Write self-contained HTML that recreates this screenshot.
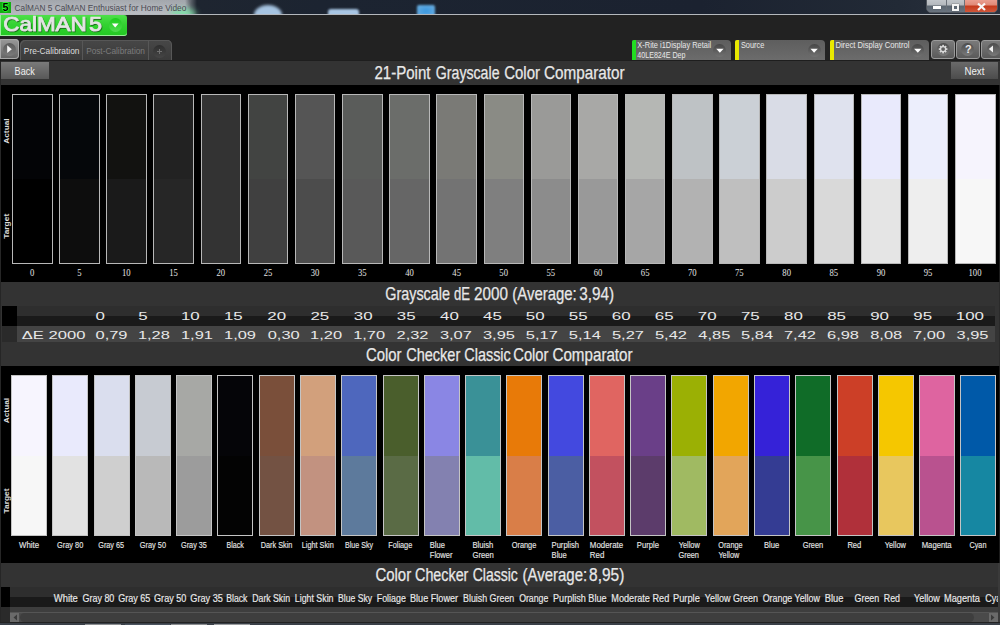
<!DOCTYPE html>
<html><head><meta charset="utf-8"><style>
html,body{margin:0;padding:0;width:1000px;height:625px;overflow:hidden;background:#222;font-family:"Liberation Sans", sans-serif}
</style></head><body>
<div style="position:absolute;left:0;top:0;width:1000px;height:15px;background:linear-gradient(90deg,#aaaeb4 0,#b0b4ba 120px,#acb0b6 185px,#5a6068 191px,#1e2530 197px,#1c2431 320px,#1b2230 700px,#222a36 900px,#2a323e 1000px);overflow:hidden">
<div style="position:absolute;left:0;top:0;width:190px;height:15px;background:linear-gradient(rgba(0,0,0,.06),rgba(255,255,255,.08) 70%,rgba(255,255,255,.15))"></div>
<div style="position:absolute;left:170px;top:9px;width:26px;height:10px;border-radius:50%;background:#7ee0a8;filter:blur(3px)"></div>
<div style="position:absolute;left:254px;top:5px;width:28px;height:20px;border-radius:50%;background:#a6c4e2;filter:blur(1.5px)"></div>
<div style="position:absolute;left:328px;top:8.5px;width:31px;height:10px;border-radius:3px;background:#a8c6e4;filter:blur(1.2px)"></div>
<div style="position:absolute;left:417px;top:5px;width:18px;height:12px;border-radius:2px;background:radial-gradient(#3a98e0,#70b0e0);filter:blur(1.2px)"></div>
<div style="position:absolute;left:0;top:2px;width:11px;height:11px;background:#12b012"></div>
<div style="position:absolute;left:925.5px;top:-2px;width:72.5px;height:15px;border:1px solid #50565e;border-radius:0 0 5px 5px;box-sizing:border-box;background:#777"></div>
<div style="position:absolute;left:926.5px;top:-1px;width:19.5px;height:13px;border-radius:0 0 0 4px;background:linear-gradient(#c4c8cc 0,#b4b8bd 45%,#5c6670 55%,#6a7480 100%)"></div>
<div style="position:absolute;left:946.5px;top:-1px;width:17px;height:13px;background:linear-gradient(#c4c8cc 0,#b4b8bd 45%,#5c6670 55%,#6a7480 100%)"></div>
<div style="position:absolute;left:964px;top:-1px;width:33px;height:13px;border-radius:0 0 4px 0;background:linear-gradient(#eca294 0,#e08a78 45%,#c43a1c 55%,#d0583c 100%)"></div>
<div style="position:absolute;left:946px;top:0;width:1px;height:12px;background:#6a7078"></div>
<div style="position:absolute;left:963.5px;top:0;width:1px;height:12px;background:#6a7078"></div>
<div style="position:absolute;left:933px;top:6px;width:7.5px;height:2.5px;background:#fff;box-shadow:0 0 1px #333"></div>
<div style="position:absolute;left:951.5px;top:3.5px;width:7px;height:7px;border:2px solid #f4f4f4;box-sizing:border-box;box-shadow:0 0 1px #333"></div>
<div style="position:absolute;left:0;top:14px;width:1000px;height:1px;background:#b4b8bd"></div>
</div>
<svg style="position:absolute;left:0;top:0" width="1000" height="15"><path d="M978 3.5 L985 10 M985 3.5 L978 10" stroke="#f8f8f8" stroke-width="2.2"/></svg>
<div style="position:absolute;left:0;top:15px;width:1000px;height:46px;background:#222222"></div>
<div style="position:absolute;left:0;top:15px;width:127px;height:21px;border-radius:0 3px 3px 0;background:linear-gradient(#4ee04a,#34d232 45%,#22c822);box-shadow:inset 0 -1px 0 #9af09a, inset 1px 0 0 #9af09a"></div>
<div style="position:absolute;left:108.5px;top:18px;width:13.5px;height:14px;border-radius:50%;background:linear-gradient(#1ccc1c,#50dc50)"></div>
<svg style="position:absolute;left:0;top:0" width="130" height="40"><path d="M111.8 23.6 L118.6 23.6 L115.2 27.4 Z" fill="#fff"/></svg>

<div style="position:absolute;left:0;top:39px;width:19px;height:20px;border-radius:0 4px 4px 0;background:linear-gradient(#9a9a9a,#646464);box-shadow:inset 0 0 0 1px #a8a8a8"></div>
<div style="position:absolute;left:2.5px;top:42.5px;width:13px;height:13px;border-radius:50%;background:linear-gradient(#5a5a5a,#7c7c7c)"></div>
<svg style="position:absolute;left:0;top:0" width="30" height="62"><path d="M7.2 45.3 L11.8 49.2 L7.2 53 Z" fill="#f4f4f4"/></svg>

<div style="position:absolute;left:20px;top:39.5px;width:152px;height:21px;border-radius:5px 5px 0 0;background:linear-gradient(#474747,#3a3a3a);box-shadow:inset 1px 1px 0 #575757, inset -1px 0 0 #575757"></div>
<div style="position:absolute;left:82px;top:41px;width:1px;height:19px;background:#575757"></div>
<div style="position:absolute;left:148px;top:41px;width:1px;height:19px;background:#575757"></div>
<div style="position:absolute;left:153px;top:44.5px;width:13px;height:13px;border-radius:50%;background:linear-gradient(#2e2e2e,#464646)"></div>
<svg style="position:absolute;left:0;top:0" width="200" height="62"><path d="M159.5 49 V54 M157 51.5 H162" stroke="#707070" stroke-width="1"/></svg>

<div style="position:absolute;left:631.7px;top:39.5px;width:99.3px;height:20.5px;border-radius:2px 4px 0 0;background:linear-gradient(#5e5e5e,#666 60%,#6c6c6c)"></div><div style="position:absolute;left:631.7px;top:40px;width:4px;height:20px;border-radius:2px 0 0 0;background:#22dd22"></div><div style="position:absolute;left:713.4px;top:43.5px;width:13px;height:13.5px;border-radius:50%;background:linear-gradient(#474747,#727272)"></div><svg style="position:absolute;left:0;top:0" width="1000" height="62"><path d="M716.2 48.8 L723.6 48.8 L719.9 52.8 Z" fill="#fff"/></svg>
<div style="position:absolute;left:735.0px;top:39.5px;width:90.2px;height:20.5px;border-radius:2px 4px 0 0;background:linear-gradient(#5e5e5e,#666 60%,#6c6c6c)"></div><div style="position:absolute;left:735.0px;top:40px;width:4px;height:20px;border-radius:2px 0 0 0;background:#e8e800"></div><div style="position:absolute;left:807.6px;top:43.5px;width:13px;height:13.5px;border-radius:50%;background:linear-gradient(#474747,#727272)"></div><svg style="position:absolute;left:0;top:0" width="1000" height="62"><path d="M810.4 48.8 L817.8 48.8 L814.1 52.8 Z" fill="#fff"/></svg>
<div style="position:absolute;left:829.7px;top:39.5px;width:99.2px;height:20.5px;border-radius:2px 4px 0 0;background:linear-gradient(#5e5e5e,#666 60%,#6c6c6c)"></div><div style="position:absolute;left:829.7px;top:40px;width:4px;height:20px;border-radius:2px 0 0 0;background:#e8e800"></div><div style="position:absolute;left:911.3px;top:43.5px;width:13px;height:13.5px;border-radius:50%;background:linear-gradient(#474747,#727272)"></div><svg style="position:absolute;left:0;top:0" width="1000" height="62"><path d="M914.1 48.8 L921.5 48.8 L917.8 52.8 Z" fill="#fff"/></svg>
<div style="position:absolute;left:931.2px;top:39.5px;width:23.5px;height:19.5px;border-radius:3px;box-sizing:border-box;border:1px solid #9a9a9a;background:linear-gradient(#7a7a7a,#5a5a5a)"></div><div style="position:absolute;left:936.5px;top:42.5px;width:13px;height:13px;border-radius:50%;background:linear-gradient(#4c4c4c,#7a7a7a)"></div>
<div style="position:absolute;left:955.9px;top:39.5px;width:23.7px;height:19.5px;border-radius:3px;box-sizing:border-box;border:1px solid #9a9a9a;background:linear-gradient(#7a7a7a,#5a5a5a)"></div><div style="position:absolute;left:961.2px;top:42.5px;width:13px;height:13px;border-radius:50%;background:linear-gradient(#4c4c4c,#7a7a7a)"></div>
<div style="position:absolute;left:981.4px;top:39.5px;width:24.0px;height:19.5px;border-radius:3px;box-sizing:border-box;border:1px solid #9a9a9a;background:linear-gradient(#7a7a7a,#5a5a5a)"></div><div style="position:absolute;left:986.9px;top:42.5px;width:13px;height:13px;border-radius:50%;background:linear-gradient(#4c4c4c,#7a7a7a)"></div>
<svg style="position:absolute;left:0;top:0" width="1000" height="62">
<g transform="translate(943.1 49.1)" fill="#dadada">
<circle r="3.1"/>
<rect x="-0.85" y="-4.3" width="1.7" height="8.6"/>
<rect x="-0.85" y="-4.3" width="1.7" height="8.6" transform="rotate(45)"/>
<rect x="-0.85" y="-4.3" width="1.7" height="8.6" transform="rotate(90)"/>
<rect x="-0.85" y="-4.3" width="1.7" height="8.6" transform="rotate(135)"/>
<circle r="1.9" fill="#5e5e5e"/>
</g>
<path d="M993 45.5 L988.8 49 L993 52.5 Z" fill="#f0f0f0"/>
</svg>
<div style="position:absolute;left:0;top:60px;width:1000px;height:1px;background:#1e1e1e"></div>
<div style="position:absolute;left:0;top:61px;width:1000px;height:24px;background:#333333"></div>
<div style="position:absolute;left:0;top:61px;width:1px;height:24px;background:#262626"></div>
<div style="position:absolute;left:1px;top:62px;width:48px;height:17px;background:linear-gradient(#7a7a7a,#585858)"></div>
<div style="position:absolute;left:951.2px;top:62px;width:47px;height:17px;background:linear-gradient(#6a6a6a,#4c4c4c)"></div>
<div style="position:absolute;left:0;top:85px;width:1px;height:197px;background:#262626"></div>
<div style="position:absolute;left:1px;top:85px;width:998px;height:197px;background:#000"></div>
<div style="position:absolute;left:999px;top:85px;width:1px;height:197px;background:#1c1c1c"></div>
<div style="position:absolute;left:12.00px;top:94px;width:40.5px;height:170px;box-sizing:border-box;border:1px solid #b8b8b8;background:linear-gradient(#030406 0,#030406 50%,#000000 50%,#000000 100%)"></div>
<div style="position:absolute;left:59.15px;top:94px;width:40.5px;height:170px;box-sizing:border-box;border:1px solid #b8b8b8;background:linear-gradient(#05070a 0,#05070a 50%,#0d0d0d 50%,#0d0d0d 100%)"></div>
<div style="position:absolute;left:106.30px;top:94px;width:40.5px;height:170px;box-sizing:border-box;border:1px solid #b8b8b8;background:linear-gradient(#121210 0,#121210 50%,#1a1a1a 50%,#1a1a1a 100%)"></div>
<div style="position:absolute;left:153.45px;top:94px;width:40.5px;height:170px;box-sizing:border-box;border:1px solid #b8b8b8;background:linear-gradient(#222222 0,#222222 50%,#262626 50%,#262626 100%)"></div>
<div style="position:absolute;left:200.60px;top:94px;width:40.5px;height:170px;box-sizing:border-box;border:1px solid #b8b8b8;background:linear-gradient(#333333 0,#333333 50%,#333333 50%,#333333 100%)"></div>
<div style="position:absolute;left:247.75px;top:94px;width:40.5px;height:170px;box-sizing:border-box;border:1px solid #b8b8b8;background:linear-gradient(#424442 0,#424442 50%,#404040 50%,#404040 100%)"></div>
<div style="position:absolute;left:294.90px;top:94px;width:40.5px;height:170px;box-sizing:border-box;border:1px solid #b8b8b8;background:linear-gradient(#555555 0,#555555 50%,#4c4c4c 50%,#4c4c4c 100%)"></div>
<div style="position:absolute;left:342.05px;top:94px;width:40.5px;height:170px;box-sizing:border-box;border:1px solid #b8b8b8;background:linear-gradient(#5a5c5a 0,#5a5c5a 50%,#595959 50%,#595959 100%)"></div>
<div style="position:absolute;left:389.20px;top:94px;width:40.5px;height:170px;box-sizing:border-box;border:1px solid #b8b8b8;background:linear-gradient(#6b6d6a 0,#6b6d6a 50%,#666666 50%,#666666 100%)"></div>
<div style="position:absolute;left:436.35px;top:94px;width:40.5px;height:170px;box-sizing:border-box;border:1px solid #b8b8b8;background:linear-gradient(#7a7a76 0,#7a7a76 50%,#737373 50%,#737373 100%)"></div>
<div style="position:absolute;left:483.50px;top:94px;width:40.5px;height:170px;box-sizing:border-box;border:1px solid #b8b8b8;background:linear-gradient(#8a8b85 0,#8a8b85 50%,#7f7f7f 50%,#7f7f7f 100%)"></div>
<div style="position:absolute;left:530.65px;top:94px;width:40.5px;height:170px;box-sizing:border-box;border:1px solid #b8b8b8;background:linear-gradient(#9a9a98 0,#9a9a98 50%,#8c8c8c 50%,#8c8c8c 100%)"></div>
<div style="position:absolute;left:577.80px;top:94px;width:40.5px;height:170px;box-sizing:border-box;border:1px solid #b8b8b8;background:linear-gradient(#a8a8a6 0,#a8a8a6 50%,#999999 50%,#999999 100%)"></div>
<div style="position:absolute;left:624.95px;top:94px;width:40.5px;height:170px;box-sizing:border-box;border:1px solid #b8b8b8;background:linear-gradient(#b5b7b4 0,#b5b7b4 50%,#a6a6a6 50%,#a6a6a6 100%)"></div>
<div style="position:absolute;left:672.10px;top:94px;width:40.5px;height:170px;box-sizing:border-box;border:1px solid #b8b8b8;background:linear-gradient(#bec2c5 0,#bec2c5 50%,#b2b2b2 50%,#b2b2b2 100%)"></div>
<div style="position:absolute;left:719.25px;top:94px;width:40.5px;height:170px;box-sizing:border-box;border:1px solid #b8b8b8;background:linear-gradient(#cbd0d6 0,#cbd0d6 50%,#bfbfbf 50%,#bfbfbf 100%)"></div>
<div style="position:absolute;left:766.40px;top:94px;width:40.5px;height:170px;box-sizing:border-box;border:1px solid #b8b8b8;background:linear-gradient(#d9dce6 0,#d9dce6 50%,#cccccc 50%,#cccccc 100%)"></div>
<div style="position:absolute;left:813.55px;top:94px;width:40.5px;height:170px;box-sizing:border-box;border:1px solid #b8b8b8;background:linear-gradient(#dfe2ee 0,#dfe2ee 50%,#d9d9d9 50%,#d9d9d9 100%)"></div>
<div style="position:absolute;left:860.70px;top:94px;width:40.5px;height:170px;box-sizing:border-box;border:1px solid #b8b8b8;background:linear-gradient(#e9eafc 0,#e9eafc 50%,#e5e5e5 50%,#e5e5e5 100%)"></div>
<div style="position:absolute;left:907.85px;top:94px;width:40.5px;height:170px;box-sizing:border-box;border:1px solid #b8b8b8;background:linear-gradient(#eceefc 0,#eceefc 50%,#eeeeee 50%,#eeeeee 100%)"></div>
<div style="position:absolute;left:955.00px;top:94px;width:40.5px;height:170px;box-sizing:border-box;border:1px solid #b8b8b8;background:linear-gradient(#f6f4fd 0,#f6f4fd 50%,#f7f7f7 50%,#f7f7f7 100%)"></div>
<div style="position:absolute;left:0;top:282px;width:1000px;height:84px;background:#333333"></div>
<div style="position:absolute;left:0;top:282px;width:1px;height:84px;background:#262626"></div>
<div style="position:absolute;left:2px;top:306px;width:15px;height:20px;background:#000"></div>
<div style="position:absolute;left:17px;top:306px;width:978px;height:10px;background:#2e2e2e"></div>
<div style="position:absolute;left:17px;top:316px;width:978px;height:10px;background:#1a1a1a"></div>
<div style="position:absolute;left:2px;top:326px;width:15px;height:16px;background:#2a2a2a"></div>
<div style="position:absolute;left:17px;top:326px;width:978px;height:16px;background:#444444"></div>
<div style="position:absolute;left:0;top:366px;width:1px;height:197px;background:#262626"></div>
<div style="position:absolute;left:1px;top:366px;width:998px;height:197px;background:#000"></div>
<div style="position:absolute;left:999px;top:366px;width:1px;height:197px;background:#1c1c1c"></div>
<div style="position:absolute;left:999px;top:282px;width:1px;height:84px;background:#2a2a2a"></div>
<div style="position:absolute;left:11.00px;top:375px;width:36px;height:161px;box-sizing:border-box;border:1px solid #c4c4c4;background:linear-gradient(#f7f5fe 0,#f7f5fe 80px,#f7f7f7 80px,#f7f7f7 100%)"></div>
<div style="position:absolute;left:52.28px;top:375px;width:36px;height:161px;box-sizing:border-box;border:1px solid #c4c4c4;background:linear-gradient(#e9eafc 0,#e9eafc 80px,#e2e2e2 80px,#e2e2e2 100%)"></div>
<div style="position:absolute;left:93.56px;top:375px;width:36px;height:161px;box-sizing:border-box;border:1px solid #c4c4c4;background:linear-gradient(#dadeee 0,#dadeee 80px,#cfcfcf 80px,#cfcfcf 100%)"></div>
<div style="position:absolute;left:134.84px;top:375px;width:36px;height:161px;box-sizing:border-box;border:1px solid #c4c4c4;background:linear-gradient(#c7cbd2 0,#c7cbd2 80px,#b9b9b9 80px,#b9b9b9 100%)"></div>
<div style="position:absolute;left:176.12px;top:375px;width:36px;height:161px;box-sizing:border-box;border:1px solid #c4c4c4;background:linear-gradient(#a7a8a5 0,#a7a8a5 80px,#9c9c9c 80px,#9c9c9c 100%)"></div>
<div style="position:absolute;left:217.40px;top:375px;width:36px;height:161px;box-sizing:border-box;border:1px solid #c4c4c4;background:linear-gradient(#050508 0,#050508 80px,#030303 80px,#030303 100%)"></div>
<div style="position:absolute;left:258.68px;top:375px;width:36px;height:161px;box-sizing:border-box;border:1px solid #c4c4c4;background:linear-gradient(#7a4f3a 0,#7a4f3a 80px,#735243 80px,#735243 100%)"></div>
<div style="position:absolute;left:299.96px;top:375px;width:36px;height:161px;box-sizing:border-box;border:1px solid #c4c4c4;background:linear-gradient(#d2a07c 0,#d2a07c 80px,#c29280 80px,#c29280 100%)"></div>
<div style="position:absolute;left:341.24px;top:375px;width:36px;height:161px;box-sizing:border-box;border:1px solid #c4c4c4;background:linear-gradient(#4e67bd 0,#4e67bd 80px,#5d7a9c 80px,#5d7a9c 100%)"></div>
<div style="position:absolute;left:382.52px;top:375px;width:36px;height:161px;box-sizing:border-box;border:1px solid #c4c4c4;background:linear-gradient(#4a5e2c 0,#4a5e2c 80px,#5a6b45 80px,#5a6b45 100%)"></div>
<div style="position:absolute;left:423.80px;top:375px;width:36px;height:161px;box-sizing:border-box;border:1px solid #c4c4c4;background:linear-gradient(#8a86e4 0,#8a86e4 80px,#8381b0 80px,#8381b0 100%)"></div>
<div style="position:absolute;left:465.08px;top:375px;width:36px;height:161px;box-sizing:border-box;border:1px solid #c4c4c4;background:linear-gradient(#3a9197 0,#3a9197 80px,#62bca8 80px,#62bca8 100%)"></div>
<div style="position:absolute;left:506.36px;top:375px;width:36px;height:161px;box-sizing:border-box;border:1px solid #c4c4c4;background:linear-gradient(#e87a08 0,#e87a08 80px,#d97e48 80px,#d97e48 100%)"></div>
<div style="position:absolute;left:547.64px;top:375px;width:36px;height:161px;box-sizing:border-box;border:1px solid #c4c4c4;background:linear-gradient(#4349df 0,#4349df 80px,#4b5ea3 80px,#4b5ea3 100%)"></div>
<div style="position:absolute;left:588.92px;top:375px;width:36px;height:161px;box-sizing:border-box;border:1px solid #c4c4c4;background:linear-gradient(#e06561 0,#e06561 80px,#c2515f 80px,#c2515f 100%)"></div>
<div style="position:absolute;left:630.20px;top:375px;width:36px;height:161px;box-sizing:border-box;border:1px solid #c4c4c4;background:linear-gradient(#6a3f88 0,#6a3f88 80px,#5c3c6b 80px,#5c3c6b 100%)"></div>
<div style="position:absolute;left:671.48px;top:375px;width:36px;height:161px;box-sizing:border-box;border:1px solid #c4c4c4;background:linear-gradient(#9bb004 0,#9bb004 80px,#a0ba62 80px,#a0ba62 100%)"></div>
<div style="position:absolute;left:712.76px;top:375px;width:36px;height:161px;box-sizing:border-box;border:1px solid #c4c4c4;background:linear-gradient(#f2a600 0,#f2a600 80px,#e2a55a 80px,#e2a55a 100%)"></div>
<div style="position:absolute;left:754.04px;top:375px;width:36px;height:161px;box-sizing:border-box;border:1px solid #c4c4c4;background:linear-gradient(#3522d8 0,#3522d8 80px,#343c93 80px,#343c93 100%)"></div>
<div style="position:absolute;left:795.32px;top:375px;width:36px;height:161px;box-sizing:border-box;border:1px solid #c4c4c4;background:linear-gradient(#106c28 0,#106c28 80px,#479448 80px,#479448 100%)"></div>
<div style="position:absolute;left:836.60px;top:375px;width:36px;height:161px;box-sizing:border-box;border:1px solid #c4c4c4;background:linear-gradient(#cc3f27 0,#cc3f27 80px,#b0303a 80px,#b0303a 100%)"></div>
<div style="position:absolute;left:877.88px;top:375px;width:36px;height:161px;box-sizing:border-box;border:1px solid #c4c4c4;background:linear-gradient(#f5c700 0,#f5c700 80px,#e8c75e 80px,#e8c75e 100%)"></div>
<div style="position:absolute;left:919.16px;top:375px;width:36px;height:161px;box-sizing:border-box;border:1px solid #c4c4c4;background:linear-gradient(#de64a0 0,#de64a0 80px,#b9528f 80px,#b9528f 100%)"></div>
<div style="position:absolute;left:960.44px;top:375px;width:36px;height:161px;box-sizing:border-box;border:1px solid #c4c4c4;background:linear-gradient(#0059a8 0,#0059a8 80px,#1687a2 80px,#1687a2 100%)"></div>
<div style="position:absolute;left:0;top:563px;width:1000px;height:59px;background:#333333"></div>
<div style="position:absolute;left:0;top:563px;width:1px;height:59px;background:#262626"></div>
<div style="position:absolute;left:1px;top:587px;width:9px;height:20px;background:#000"></div>
<div style="position:absolute;left:10px;top:587px;width:988px;height:10px;background:#2e2e2e"></div>
<div style="position:absolute;left:10px;top:597px;width:988px;height:10px;background:#1a1a1a"></div>
<div style="position:absolute;left:1px;top:607px;width:9px;height:15px;background:#2a2a2a"></div>
<div style="position:absolute;left:10px;top:607px;width:988px;height:15px;background:#3e3e3e"></div>
<div style="position:absolute;left:10px;top:612px;width:988px;height:1px;background:#555555"></div>
<div style="position:absolute;left:10px;top:613px;width:988px;height:9px;background:#4a4a4a"></div>
<div style="position:absolute;left:20px;top:613px;width:954px;height:9px;border-radius:5px;background:#3e3e3e"></div>
<div style="position:absolute;left:10px;top:613px;width:9px;height:9px;background:#6a6a6a"></div>
<div style="position:absolute;left:989px;top:613px;width:9px;height:9px;background:#6a6a6a"></div>
<svg style="position:absolute;left:0;top:0" width="1000" height="625"><path d="M17 614.5 L13.5 617.5 L17 620.5 Z M991 614.5 L994.5 617.5 L991 620.5 Z" fill="#3a3a3a"/></svg>
<div style="position:absolute;left:998px;top:563px;width:2px;height:59px;background:#3a3a3a"></div>
<div style="position:absolute;left:0;top:622.5px;width:1000px;height:2.5px;background:#3a4048"></div>
<div style="position:absolute;left:85px;top:623.5px;width:36px;height:1.5px;background:#8c8e90"></div>
<div style="position:absolute;left:125px;top:623.5px;width:45px;height:1.5px;background:#4c5560"></div>
<div style="position:absolute;left:171px;top:623.5px;width:36px;height:1.5px;background:#8c8e90"></div>
<div style="position:absolute;left:214px;top:623.5px;width:36px;height:1.5px;background:#9a9c9e"></div>
<svg style="position:absolute;left:0;top:0" width="20" height="625">
<g font-family="Liberation Sans" font-weight="bold" font-size="7.6" fill="#dcdcdc">
<text transform="translate(8.6 143.8) rotate(-90)" textLength="25.5" lengthAdjust="spacingAndGlyphs">Actual</text>
<text transform="translate(8.6 238.8) rotate(-90)" textLength="25" lengthAdjust="spacingAndGlyphs">Target</text>
<text transform="translate(8.6 423.3) rotate(-90)" textLength="25.5" lengthAdjust="spacingAndGlyphs">Actual</text>
<text transform="translate(8.6 513.5) rotate(-90)" textLength="25" lengthAdjust="spacingAndGlyphs">Target</text>
</g></svg>
<svg style="position:absolute;left:0;top:0" width="1000" height="625">
<defs><filter id="sh" x="-10%" y="-10%" width="120%" height="130%"><feDropShadow dx="0.8" dy="1" stdDeviation="0.6" flood-color="#136313" flood-opacity="0.9"/></filter>
<clipPath id="cl"><rect x="0" y="587" width="998" height="20"/></clipPath></defs>
<text x="2.48" y="11.00" font-family="Liberation Sans, sans-serif" font-weight="bold" font-size="10.000" fill="#000000" textLength="6.01" lengthAdjust="spacingAndGlyphs" stroke="#30ff30" stroke-width="1.3" paint-order="stroke">5</text>
<text x="14.59" y="10.50" font-family="Liberation Sans, sans-serif" font-weight="normal" font-size="9.420" fill="#4a4a52" textLength="171.71" lengthAdjust="spacingAndGlyphs">CalMAN 5 CalMAN Enthusiast for Home Video</text>
<text x="3.38" y="30.90" font-family="Liberation Sans, sans-serif" font-weight="normal" font-size="20.000" fill="#e4e4e4" textLength="83.33" lengthAdjust="spacingAndGlyphs" stroke="#e4e4e4" stroke-width="0.7" filter="url(#sh)">CalMAN</text>
<text x="88.97" y="30.90" font-family="Liberation Sans, sans-serif" font-weight="normal" font-size="20.000" fill="#e4e4e4" textLength="12.98" lengthAdjust="spacingAndGlyphs" stroke="#e4e4e4" stroke-width="0.7" filter="url(#sh)">5</text>
<text x="23.83" y="53.50" font-family="Liberation Sans, sans-serif" font-weight="normal" font-size="8.551" fill="#dcdcdc" textLength="55.64" lengthAdjust="spacingAndGlyphs">Pre-Calibration</text>
<text x="86.14" y="53.50" font-family="Liberation Sans, sans-serif" font-weight="normal" font-size="8.551" fill="#7c7c7c" textLength="58.83" lengthAdjust="spacingAndGlyphs">Post-Calibration</text>
<text x="637.35" y="48.20" font-family="Liberation Sans, sans-serif" font-weight="normal" font-size="8.551" fill="#e8e8e8" textLength="73.91" lengthAdjust="spacingAndGlyphs">X-Rite i1Display Retail</text>
<text x="637.36" y="57.80" font-family="Liberation Sans, sans-serif" font-weight="normal" font-size="8.261" fill="#e8e8e8" textLength="48.10" lengthAdjust="spacingAndGlyphs">40LE824E Dep</text>
<text x="740.91" y="48.20" font-family="Liberation Sans, sans-serif" font-weight="normal" font-size="8.551" fill="#e8e8e8" textLength="23.36" lengthAdjust="spacingAndGlyphs">Source</text>
<text x="835.39" y="48.20" font-family="Liberation Sans, sans-serif" font-weight="normal" font-size="8.551" fill="#e8e8e8" textLength="74.09" lengthAdjust="spacingAndGlyphs">Direct Display Control</text>
<text x="964.97" y="53.00" font-family="Liberation Sans, sans-serif" font-weight="bold" font-size="10.000" fill="#eeeeee" textLength="6.58" lengthAdjust="spacingAndGlyphs">?</text>
<text x="14.57" y="74.50" font-family="Liberation Sans, sans-serif" font-weight="normal" font-size="11.449" fill="#f0f0f0" textLength="20.24" lengthAdjust="spacingAndGlyphs">Back</text>
<text x="964.42" y="74.50" font-family="Liberation Sans, sans-serif" font-weight="normal" font-size="11.159" fill="#f0f0f0" textLength="19.96" lengthAdjust="spacingAndGlyphs">Next</text>
<text x="374.45" y="79.00" font-family="Liberation Sans, sans-serif" font-weight="normal" font-size="17.971" fill="#e8e8e8" textLength="56.02" lengthAdjust="spacingAndGlyphs" stroke="#e8e8e8" stroke-width="0.25">21-Point</text>
<text x="435.79" y="79.00" font-family="Liberation Sans, sans-serif" font-weight="normal" font-size="17.971" fill="#e8e8e8" textLength="63.72" lengthAdjust="spacingAndGlyphs" stroke="#e8e8e8" stroke-width="0.25">Grayscale</text>
<text x="504.25" y="79.00" font-family="Liberation Sans, sans-serif" font-weight="normal" font-size="17.971" fill="#e8e8e8" textLength="35.74" lengthAdjust="spacingAndGlyphs" stroke="#e8e8e8" stroke-width="0.25">Color</text>
<text x="543.99" y="79.00" font-family="Liberation Sans, sans-serif" font-weight="normal" font-size="17.971" fill="#e8e8e8" textLength="80.71" lengthAdjust="spacingAndGlyphs" stroke="#e8e8e8" stroke-width="0.25">Comparator</text>
<text x="30.09" y="275.80" font-family="Liberation Serif, serif" font-weight="normal" font-size="10.462" fill="#e4e4e4" textLength="4.32" lengthAdjust="spacingAndGlyphs">0</text>
<text x="77.16" y="275.80" font-family="Liberation Serif, serif" font-weight="normal" font-size="10.462" fill="#e4e4e4" textLength="4.32" lengthAdjust="spacingAndGlyphs">5</text>
<text x="122.02" y="275.80" font-family="Liberation Serif, serif" font-weight="normal" font-size="10.462" fill="#e4e4e4" textLength="8.63" lengthAdjust="spacingAndGlyphs">10</text>
<text x="169.17" y="275.80" font-family="Liberation Serif, serif" font-weight="normal" font-size="10.462" fill="#e4e4e4" textLength="8.63" lengthAdjust="spacingAndGlyphs">15</text>
<text x="216.49" y="275.80" font-family="Liberation Serif, serif" font-weight="normal" font-size="10.462" fill="#e4e4e4" textLength="8.63" lengthAdjust="spacingAndGlyphs">20</text>
<text x="263.64" y="275.80" font-family="Liberation Serif, serif" font-weight="normal" font-size="10.462" fill="#e4e4e4" textLength="8.63" lengthAdjust="spacingAndGlyphs">25</text>
<text x="310.79" y="275.80" font-family="Liberation Serif, serif" font-weight="normal" font-size="10.462" fill="#e4e4e4" textLength="8.63" lengthAdjust="spacingAndGlyphs">30</text>
<text x="357.94" y="275.80" font-family="Liberation Serif, serif" font-weight="normal" font-size="10.462" fill="#e4e4e4" textLength="8.63" lengthAdjust="spacingAndGlyphs">35</text>
<text x="405.22" y="275.80" font-family="Liberation Serif, serif" font-weight="normal" font-size="10.462" fill="#e4e4e4" textLength="8.63" lengthAdjust="spacingAndGlyphs">40</text>
<text x="452.37" y="275.80" font-family="Liberation Serif, serif" font-weight="normal" font-size="10.462" fill="#e4e4e4" textLength="8.63" lengthAdjust="spacingAndGlyphs">45</text>
<text x="499.35" y="275.80" font-family="Liberation Serif, serif" font-weight="normal" font-size="10.462" fill="#e4e4e4" textLength="8.63" lengthAdjust="spacingAndGlyphs">50</text>
<text x="546.50" y="275.80" font-family="Liberation Serif, serif" font-weight="normal" font-size="10.462" fill="#e4e4e4" textLength="8.63" lengthAdjust="spacingAndGlyphs">55</text>
<text x="593.69" y="275.80" font-family="Liberation Serif, serif" font-weight="normal" font-size="10.462" fill="#e4e4e4" textLength="8.63" lengthAdjust="spacingAndGlyphs">60</text>
<text x="640.84" y="275.80" font-family="Liberation Serif, serif" font-weight="normal" font-size="10.462" fill="#e4e4e4" textLength="8.63" lengthAdjust="spacingAndGlyphs">65</text>
<text x="687.90" y="275.80" font-family="Liberation Serif, serif" font-weight="normal" font-size="10.462" fill="#e4e4e4" textLength="8.63" lengthAdjust="spacingAndGlyphs">70</text>
<text x="735.05" y="275.80" font-family="Liberation Serif, serif" font-weight="normal" font-size="10.462" fill="#e4e4e4" textLength="8.63" lengthAdjust="spacingAndGlyphs">75</text>
<text x="782.33" y="275.80" font-family="Liberation Serif, serif" font-weight="normal" font-size="10.462" fill="#e4e4e4" textLength="8.63" lengthAdjust="spacingAndGlyphs">80</text>
<text x="829.48" y="275.80" font-family="Liberation Serif, serif" font-weight="normal" font-size="10.462" fill="#e4e4e4" textLength="8.63" lengthAdjust="spacingAndGlyphs">85</text>
<text x="876.63" y="275.80" font-family="Liberation Serif, serif" font-weight="normal" font-size="10.462" fill="#e4e4e4" textLength="8.63" lengthAdjust="spacingAndGlyphs">90</text>
<text x="923.78" y="275.80" font-family="Liberation Serif, serif" font-weight="normal" font-size="10.462" fill="#e4e4e4" textLength="8.63" lengthAdjust="spacingAndGlyphs">95</text>
<text x="968.56" y="275.80" font-family="Liberation Serif, serif" font-weight="normal" font-size="10.462" fill="#e4e4e4" textLength="12.95" lengthAdjust="spacingAndGlyphs">100</text>
<text x="385.28" y="300.00" font-family="Liberation Sans, sans-serif" font-weight="normal" font-size="18.841" fill="#e8e8e8" textLength="64.64" lengthAdjust="spacingAndGlyphs" stroke="#e8e8e8" stroke-width="0.25">Grayscale</text>
<text x="453.88" y="300.00" font-family="Liberation Sans, sans-serif" font-weight="normal" font-size="18.841" fill="#e8e8e8" textLength="16.01" lengthAdjust="spacingAndGlyphs" stroke="#e8e8e8" stroke-width="0.25">dE</text>
<text x="474.04" y="300.00" font-family="Liberation Sans, sans-serif" font-weight="normal" font-size="18.841" fill="#e8e8e8" textLength="33.91" lengthAdjust="spacingAndGlyphs" stroke="#e8e8e8" stroke-width="0.25">2000</text>
<text x="512.30" y="300.00" font-family="Liberation Sans, sans-serif" font-weight="normal" font-size="18.841" fill="#e8e8e8" textLength="64.41" lengthAdjust="spacingAndGlyphs" stroke="#e8e8e8" stroke-width="0.25">(Average:</text>
<text x="579.34" y="300.00" font-family="Liberation Sans, sans-serif" font-weight="normal" font-size="18.841" fill="#e8e8e8" textLength="34.87" lengthAdjust="spacingAndGlyphs" stroke="#e8e8e8" stroke-width="0.25">3,94)</text>
<text x="21.67" y="339.00" font-family="Liberation Sans, sans-serif" font-weight="normal" font-size="11.594" fill="#e8e8e8" textLength="63.73" lengthAdjust="spacingAndGlyphs">ΔE 2000</text>
<text x="95.49" y="320.00" font-family="Liberation Sans, sans-serif" font-weight="normal" font-size="11.014" fill="#e8e8e8" textLength="9.40" lengthAdjust="spacingAndGlyphs">0</text>
<text x="95.51" y="339.00" font-family="Liberation Sans, sans-serif" font-weight="normal" font-size="11.594" fill="#e8e8e8" textLength="31.99" lengthAdjust="spacingAndGlyphs">0,79</text>
<text x="138.37" y="320.00" font-family="Liberation Sans, sans-serif" font-weight="normal" font-size="11.014" fill="#e8e8e8" textLength="9.40" lengthAdjust="spacingAndGlyphs">5</text>
<text x="137.90" y="339.00" font-family="Liberation Sans, sans-serif" font-weight="normal" font-size="11.594" fill="#e8e8e8" textLength="31.99" lengthAdjust="spacingAndGlyphs">1,28</text>
<text x="180.92" y="320.00" font-family="Liberation Sans, sans-serif" font-weight="normal" font-size="11.014" fill="#e8e8e8" textLength="18.80" lengthAdjust="spacingAndGlyphs">10</text>
<text x="180.95" y="339.00" font-family="Liberation Sans, sans-serif" font-weight="normal" font-size="11.594" fill="#e8e8e8" textLength="31.99" lengthAdjust="spacingAndGlyphs">1,91</text>
<text x="223.97" y="320.00" font-family="Liberation Sans, sans-serif" font-weight="normal" font-size="11.014" fill="#e8e8e8" textLength="18.80" lengthAdjust="spacingAndGlyphs">15</text>
<text x="224.00" y="339.00" font-family="Liberation Sans, sans-serif" font-weight="normal" font-size="11.594" fill="#e8e8e8" textLength="31.99" lengthAdjust="spacingAndGlyphs">1,09</text>
<text x="267.36" y="320.00" font-family="Liberation Sans, sans-serif" font-weight="normal" font-size="11.014" fill="#e8e8e8" textLength="18.80" lengthAdjust="spacingAndGlyphs">20</text>
<text x="267.71" y="339.00" font-family="Liberation Sans, sans-serif" font-weight="normal" font-size="11.594" fill="#e8e8e8" textLength="31.99" lengthAdjust="spacingAndGlyphs">0,30</text>
<text x="310.41" y="320.00" font-family="Liberation Sans, sans-serif" font-weight="normal" font-size="11.014" fill="#e8e8e8" textLength="18.80" lengthAdjust="spacingAndGlyphs">25</text>
<text x="310.10" y="339.00" font-family="Liberation Sans, sans-serif" font-weight="normal" font-size="11.594" fill="#e8e8e8" textLength="31.99" lengthAdjust="spacingAndGlyphs">1,20</text>
<text x="353.79" y="320.00" font-family="Liberation Sans, sans-serif" font-weight="normal" font-size="11.014" fill="#e8e8e8" textLength="18.80" lengthAdjust="spacingAndGlyphs">30</text>
<text x="353.15" y="339.00" font-family="Liberation Sans, sans-serif" font-weight="normal" font-size="11.594" fill="#e8e8e8" textLength="31.99" lengthAdjust="spacingAndGlyphs">1,70</text>
<text x="396.84" y="320.00" font-family="Liberation Sans, sans-serif" font-weight="normal" font-size="11.014" fill="#e8e8e8" textLength="18.80" lengthAdjust="spacingAndGlyphs">35</text>
<text x="396.53" y="339.00" font-family="Liberation Sans, sans-serif" font-weight="normal" font-size="11.594" fill="#e8e8e8" textLength="31.99" lengthAdjust="spacingAndGlyphs">2,32</text>
<text x="440.06" y="320.00" font-family="Liberation Sans, sans-serif" font-weight="normal" font-size="11.014" fill="#e8e8e8" textLength="18.80" lengthAdjust="spacingAndGlyphs">40</text>
<text x="439.91" y="339.00" font-family="Liberation Sans, sans-serif" font-weight="normal" font-size="11.594" fill="#e8e8e8" textLength="31.99" lengthAdjust="spacingAndGlyphs">3,07</text>
<text x="483.11" y="320.00" font-family="Liberation Sans, sans-serif" font-weight="normal" font-size="11.014" fill="#e8e8e8" textLength="18.80" lengthAdjust="spacingAndGlyphs">45</text>
<text x="482.96" y="339.00" font-family="Liberation Sans, sans-serif" font-weight="normal" font-size="11.594" fill="#e8e8e8" textLength="31.99" lengthAdjust="spacingAndGlyphs">3,95</text>
<text x="525.82" y="320.00" font-family="Liberation Sans, sans-serif" font-weight="normal" font-size="11.014" fill="#e8e8e8" textLength="18.80" lengthAdjust="spacingAndGlyphs">50</text>
<text x="525.84" y="339.00" font-family="Liberation Sans, sans-serif" font-weight="normal" font-size="11.594" fill="#e8e8e8" textLength="31.99" lengthAdjust="spacingAndGlyphs">5,17</text>
<text x="568.87" y="320.00" font-family="Liberation Sans, sans-serif" font-weight="normal" font-size="11.014" fill="#e8e8e8" textLength="18.80" lengthAdjust="spacingAndGlyphs">55</text>
<text x="568.89" y="339.00" font-family="Liberation Sans, sans-serif" font-weight="normal" font-size="11.594" fill="#e8e8e8" textLength="31.99" lengthAdjust="spacingAndGlyphs">5,14</text>
<text x="611.76" y="320.00" font-family="Liberation Sans, sans-serif" font-weight="normal" font-size="11.014" fill="#e8e8e8" textLength="18.80" lengthAdjust="spacingAndGlyphs">60</text>
<text x="611.94" y="339.00" font-family="Liberation Sans, sans-serif" font-weight="normal" font-size="11.594" fill="#e8e8e8" textLength="31.99" lengthAdjust="spacingAndGlyphs">5,27</text>
<text x="654.81" y="320.00" font-family="Liberation Sans, sans-serif" font-weight="normal" font-size="11.014" fill="#e8e8e8" textLength="18.80" lengthAdjust="spacingAndGlyphs">65</text>
<text x="654.99" y="339.00" font-family="Liberation Sans, sans-serif" font-weight="normal" font-size="11.594" fill="#e8e8e8" textLength="31.99" lengthAdjust="spacingAndGlyphs">5,42</text>
<text x="697.86" y="320.00" font-family="Liberation Sans, sans-serif" font-weight="normal" font-size="11.014" fill="#e8e8e8" textLength="18.80" lengthAdjust="spacingAndGlyphs">70</text>
<text x="698.37" y="339.00" font-family="Liberation Sans, sans-serif" font-weight="normal" font-size="11.594" fill="#e8e8e8" textLength="31.99" lengthAdjust="spacingAndGlyphs">4,85</text>
<text x="740.91" y="320.00" font-family="Liberation Sans, sans-serif" font-weight="normal" font-size="11.014" fill="#e8e8e8" textLength="18.80" lengthAdjust="spacingAndGlyphs">75</text>
<text x="741.09" y="339.00" font-family="Liberation Sans, sans-serif" font-weight="normal" font-size="11.594" fill="#e8e8e8" textLength="31.99" lengthAdjust="spacingAndGlyphs">5,84</text>
<text x="784.12" y="320.00" font-family="Liberation Sans, sans-serif" font-weight="normal" font-size="11.014" fill="#e8e8e8" textLength="18.80" lengthAdjust="spacingAndGlyphs">80</text>
<text x="783.98" y="339.00" font-family="Liberation Sans, sans-serif" font-weight="normal" font-size="11.594" fill="#e8e8e8" textLength="31.99" lengthAdjust="spacingAndGlyphs">7,42</text>
<text x="827.17" y="320.00" font-family="Liberation Sans, sans-serif" font-weight="normal" font-size="11.014" fill="#e8e8e8" textLength="18.80" lengthAdjust="spacingAndGlyphs">85</text>
<text x="827.03" y="339.00" font-family="Liberation Sans, sans-serif" font-weight="normal" font-size="11.594" fill="#e8e8e8" textLength="31.99" lengthAdjust="spacingAndGlyphs">6,98</text>
<text x="870.22" y="320.00" font-family="Liberation Sans, sans-serif" font-weight="normal" font-size="11.014" fill="#e8e8e8" textLength="18.80" lengthAdjust="spacingAndGlyphs">90</text>
<text x="870.24" y="339.00" font-family="Liberation Sans, sans-serif" font-weight="normal" font-size="11.594" fill="#e8e8e8" textLength="31.99" lengthAdjust="spacingAndGlyphs">8,08</text>
<text x="913.27" y="320.00" font-family="Liberation Sans, sans-serif" font-weight="normal" font-size="11.014" fill="#e8e8e8" textLength="18.80" lengthAdjust="spacingAndGlyphs">95</text>
<text x="913.13" y="339.00" font-family="Liberation Sans, sans-serif" font-weight="normal" font-size="11.594" fill="#e8e8e8" textLength="31.99" lengthAdjust="spacingAndGlyphs">7,00</text>
<text x="955.82" y="320.00" font-family="Liberation Sans, sans-serif" font-weight="normal" font-size="11.014" fill="#e8e8e8" textLength="28.19" lengthAdjust="spacingAndGlyphs">100</text>
<text x="956.51" y="339.00" font-family="Liberation Sans, sans-serif" font-weight="normal" font-size="11.594" fill="#e8e8e8" textLength="31.99" lengthAdjust="spacingAndGlyphs">3,95</text>
<text x="365.96" y="361.00" font-family="Liberation Sans, sans-serif" font-weight="normal" font-size="18.406" fill="#e8e8e8" textLength="35.54" lengthAdjust="spacingAndGlyphs" stroke="#e8e8e8" stroke-width="0.25">Color</text>
<text x="406.17" y="361.00" font-family="Liberation Sans, sans-serif" font-weight="normal" font-size="18.406" fill="#e8e8e8" textLength="54.12" lengthAdjust="spacingAndGlyphs" stroke="#e8e8e8" stroke-width="0.25">Checker</text>
<text x="464.28" y="361.00" font-family="Liberation Sans, sans-serif" font-weight="normal" font-size="18.406" fill="#e8e8e8" textLength="46.51" lengthAdjust="spacingAndGlyphs" stroke="#e8e8e8" stroke-width="0.25">Classic</text>
<text x="513.26" y="361.00" font-family="Liberation Sans, sans-serif" font-weight="normal" font-size="18.406" fill="#e8e8e8" textLength="35.23" lengthAdjust="spacingAndGlyphs" stroke="#e8e8e8" stroke-width="0.25">Color</text>
<text x="552.44" y="361.00" font-family="Liberation Sans, sans-serif" font-weight="normal" font-size="18.406" fill="#e8e8e8" textLength="80.16" lengthAdjust="spacingAndGlyphs" stroke="#e8e8e8" stroke-width="0.25">Comparator</text>
<text x="375.45" y="581.00" font-family="Liberation Sans, sans-serif" font-weight="normal" font-size="18.261" fill="#e8e8e8" textLength="35.74" lengthAdjust="spacingAndGlyphs" stroke="#e8e8e8" stroke-width="0.25">Color</text>
<text x="415.08" y="581.00" font-family="Liberation Sans, sans-serif" font-weight="normal" font-size="18.261" fill="#e8e8e8" textLength="53.30" lengthAdjust="spacingAndGlyphs" stroke="#e8e8e8" stroke-width="0.25">Checker</text>
<text x="472.70" y="581.00" font-family="Liberation Sans, sans-serif" font-weight="normal" font-size="18.261" fill="#e8e8e8" textLength="45.18" lengthAdjust="spacingAndGlyphs" stroke="#e8e8e8" stroke-width="0.25">Classic</text>
<text x="522.50" y="581.00" font-family="Liberation Sans, sans-serif" font-weight="normal" font-size="18.261" fill="#e8e8e8" textLength="64.61" lengthAdjust="spacingAndGlyphs" stroke="#e8e8e8" stroke-width="0.25">(Average:</text>
<text x="589.08" y="581.00" font-family="Liberation Sans, sans-serif" font-weight="normal" font-size="18.261" fill="#e8e8e8" textLength="35.24" lengthAdjust="spacingAndGlyphs" stroke="#e8e8e8" stroke-width="0.25">8,95)</text>
<text x="53.75" y="601.90" font-family="Liberation Sans, sans-serif" font-weight="normal" font-size="10.435" fill="#e8e8e8" textLength="24.09" lengthAdjust="spacingAndGlyphs" stroke="#e8e8e8" stroke-width="0.2">White</text>
<text x="82.55" y="601.90" font-family="Liberation Sans, sans-serif" font-weight="normal" font-size="10.435" fill="#e8e8e8" textLength="31.77" lengthAdjust="spacingAndGlyphs" stroke="#e8e8e8" stroke-width="0.2">Gray 80</text>
<text x="118.30" y="601.90" font-family="Liberation Sans, sans-serif" font-weight="normal" font-size="10.435" fill="#e8e8e8" textLength="32.03" lengthAdjust="spacingAndGlyphs" stroke="#e8e8e8" stroke-width="0.2">Gray 65</text>
<text x="154.05" y="601.90" font-family="Liberation Sans, sans-serif" font-weight="normal" font-size="10.435" fill="#e8e8e8" textLength="32.28" lengthAdjust="spacingAndGlyphs" stroke="#e8e8e8" stroke-width="0.2">Gray 50</text>
<text x="190.29" y="601.90" font-family="Liberation Sans, sans-serif" font-weight="normal" font-size="10.435" fill="#e8e8e8" textLength="32.54" lengthAdjust="spacingAndGlyphs" stroke="#e8e8e8" stroke-width="0.2">Gray 35</text>
<text x="226.31" y="601.90" font-family="Liberation Sans, sans-serif" font-weight="normal" font-size="10.435" fill="#e8e8e8" textLength="21.10" lengthAdjust="spacingAndGlyphs" stroke="#e8e8e8" stroke-width="0.2">Black</text>
<text x="252.30" y="601.90" font-family="Liberation Sans, sans-serif" font-weight="normal" font-size="10.435" fill="#e8e8e8" textLength="37.68" lengthAdjust="spacingAndGlyphs" stroke="#e8e8e8" stroke-width="0.2">Dark Skin</text>
<text x="294.80" y="601.90" font-family="Liberation Sans, sans-serif" font-weight="normal" font-size="10.435" fill="#e8e8e8" textLength="38.70" lengthAdjust="spacingAndGlyphs" stroke="#e8e8e8" stroke-width="0.2">Light Skin</text>
<text x="338.06" y="601.90" font-family="Liberation Sans, sans-serif" font-weight="normal" font-size="10.435" fill="#e8e8e8" textLength="33.94" lengthAdjust="spacingAndGlyphs" stroke="#e8e8e8" stroke-width="0.2">Blue Sky</text>
<text x="376.79" y="601.90" font-family="Liberation Sans, sans-serif" font-weight="normal" font-size="10.435" fill="#e8e8e8" textLength="29.03" lengthAdjust="spacingAndGlyphs" stroke="#e8e8e8" stroke-width="0.2">Foliage</text>
<text x="410.02" y="601.90" font-family="Liberation Sans, sans-serif" font-weight="normal" font-size="10.435" fill="#e8e8e8" textLength="48.10" lengthAdjust="spacingAndGlyphs" stroke="#e8e8e8" stroke-width="0.2">Blue Flower</text>
<text x="463.04" y="601.90" font-family="Liberation Sans, sans-serif" font-weight="normal" font-size="10.435" fill="#e8e8e8" textLength="51.21" lengthAdjust="spacingAndGlyphs" stroke="#e8e8e8" stroke-width="0.2">Bluish Green</text>
<text x="519.15" y="601.90" font-family="Liberation Sans, sans-serif" font-weight="normal" font-size="10.435" fill="#e8e8e8" textLength="29.17" lengthAdjust="spacingAndGlyphs" stroke="#e8e8e8" stroke-width="0.2">Orange</text>
<text x="553.02" y="601.90" font-family="Liberation Sans, sans-serif" font-weight="normal" font-size="10.435" fill="#e8e8e8" textLength="53.56" lengthAdjust="spacingAndGlyphs" stroke="#e8e8e8" stroke-width="0.2">Purplish Blue</text>
<text x="611.27" y="601.90" font-family="Liberation Sans, sans-serif" font-weight="normal" font-size="10.435" fill="#e8e8e8" textLength="58.00" lengthAdjust="spacingAndGlyphs" stroke="#e8e8e8" stroke-width="0.2">Moderate Red</text>
<text x="673.01" y="601.90" font-family="Liberation Sans, sans-serif" font-weight="normal" font-size="10.435" fill="#e8e8e8" textLength="26.83" lengthAdjust="spacingAndGlyphs" stroke="#e8e8e8" stroke-width="0.2">Purple</text>
<text x="704.82" y="601.90" font-family="Liberation Sans, sans-serif" font-weight="normal" font-size="10.435" fill="#e8e8e8" textLength="53.19" lengthAdjust="spacingAndGlyphs" stroke="#e8e8e8" stroke-width="0.2">Yellow Green</text>
<text x="762.65" y="601.90" font-family="Liberation Sans, sans-serif" font-weight="normal" font-size="10.435" fill="#e8e8e8" textLength="57.28" lengthAdjust="spacingAndGlyphs" stroke="#e8e8e8" stroke-width="0.2">Orange Yellow</text>
<text x="824.76" y="601.90" font-family="Liberation Sans, sans-serif" font-weight="normal" font-size="10.435" fill="#e8e8e8" textLength="18.58" lengthAdjust="spacingAndGlyphs" stroke="#e8e8e8" stroke-width="0.2">Blue</text>
<text x="854.56" y="601.90" font-family="Liberation Sans, sans-serif" font-weight="normal" font-size="10.435" fill="#e8e8e8" textLength="24.69" lengthAdjust="spacingAndGlyphs" stroke="#e8e8e8" stroke-width="0.2">Green</text>
<text x="883.79" y="601.90" font-family="Liberation Sans, sans-serif" font-weight="normal" font-size="10.435" fill="#e8e8e8" textLength="16.20" lengthAdjust="spacingAndGlyphs" stroke="#e8e8e8" stroke-width="0.2">Red</text>
<text x="914.02" y="601.90" font-family="Liberation Sans, sans-serif" font-weight="normal" font-size="10.435" fill="#e8e8e8" textLength="25.61" lengthAdjust="spacingAndGlyphs" stroke="#e8e8e8" stroke-width="0.2">Yellow</text>
<text x="944.01" y="601.90" font-family="Liberation Sans, sans-serif" font-weight="normal" font-size="10.435" fill="#e8e8e8" textLength="35.95" lengthAdjust="spacingAndGlyphs" stroke="#e8e8e8" stroke-width="0.2">Magenta</text>
<text x="985.25" y="601.90" font-family="Liberation Sans, sans-serif" font-weight="normal" font-size="10.435" fill="#e8e8e8" textLength="20.95" lengthAdjust="spacingAndGlyphs" stroke="#e8e8e8" stroke-width="0.2" clip-path="url(#cl)">Cyan</text>
<text x="19.00" y="548.00" font-family="Liberation Sans, sans-serif" font-weight="normal" font-size="8.986" fill="#e4e4e4" textLength="20.08" lengthAdjust="spacingAndGlyphs" stroke="#e4e4e4" stroke-width="0.15">White</text>
<text x="57.03" y="548.00" font-family="Liberation Sans, sans-serif" font-weight="normal" font-size="8.986" fill="#e4e4e4" textLength="26.24" lengthAdjust="spacingAndGlyphs" stroke="#e4e4e4" stroke-width="0.15">Gray 80</text>
<text x="98.24" y="548.00" font-family="Liberation Sans, sans-serif" font-weight="normal" font-size="8.986" fill="#e4e4e4" textLength="25.83" lengthAdjust="spacingAndGlyphs" stroke="#e4e4e4" stroke-width="0.15">Gray 65</text>
<text x="139.83" y="548.00" font-family="Liberation Sans, sans-serif" font-weight="normal" font-size="8.986" fill="#e4e4e4" textLength="26.24" lengthAdjust="spacingAndGlyphs" stroke="#e4e4e4" stroke-width="0.15">Gray 50</text>
<text x="181.04" y="548.00" font-family="Liberation Sans, sans-serif" font-weight="normal" font-size="8.986" fill="#e4e4e4" textLength="25.83" lengthAdjust="spacingAndGlyphs" stroke="#e4e4e4" stroke-width="0.15">Gray 35</text>
<text x="226.43" y="548.00" font-family="Liberation Sans, sans-serif" font-weight="normal" font-size="8.986" fill="#e4e4e4" textLength="17.30" lengthAdjust="spacingAndGlyphs" stroke="#e4e4e4" stroke-width="0.15">Black</text>
<text x="260.72" y="548.00" font-family="Liberation Sans, sans-serif" font-weight="normal" font-size="8.986" fill="#e4e4e4" textLength="31.59" lengthAdjust="spacingAndGlyphs" stroke="#e4e4e4" stroke-width="0.15">Dark Skin</text>
<text x="301.72" y="548.00" font-family="Liberation Sans, sans-serif" font-weight="normal" font-size="8.986" fill="#e4e4e4" textLength="31.99" lengthAdjust="spacingAndGlyphs" stroke="#e4e4e4" stroke-width="0.15">Light Skin</text>
<text x="345.03" y="548.00" font-family="Liberation Sans, sans-serif" font-weight="normal" font-size="8.986" fill="#e4e4e4" textLength="27.97" lengthAdjust="spacingAndGlyphs" stroke="#e4e4e4" stroke-width="0.15">Blue Sky</text>
<text x="388.21" y="548.00" font-family="Liberation Sans, sans-serif" font-weight="normal" font-size="8.986" fill="#e4e4e4" textLength="24.05" lengthAdjust="spacingAndGlyphs" stroke="#e4e4e4" stroke-width="0.15">Foliage</text>
<text x="429.80" y="548.00" font-family="Liberation Sans, sans-serif" font-weight="normal" font-size="8.986" fill="#e4e4e4" textLength="15.08" lengthAdjust="spacingAndGlyphs" stroke="#e4e4e4" stroke-width="0.15">Blue</text>
<text x="429.80" y="557.80" font-family="Liberation Sans, sans-serif" font-weight="normal" font-size="8.986" fill="#e4e4e4" textLength="22.60" lengthAdjust="spacingAndGlyphs" stroke="#e4e4e4" stroke-width="0.15">Flower</text>
<text x="472.39" y="548.00" font-family="Liberation Sans, sans-serif" font-weight="normal" font-size="8.986" fill="#e4e4e4" textLength="20.84" lengthAdjust="spacingAndGlyphs" stroke="#e4e4e4" stroke-width="0.15">Bluish</text>
<text x="472.62" y="557.80" font-family="Liberation Sans, sans-serif" font-weight="normal" font-size="8.986" fill="#e4e4e4" textLength="21.27" lengthAdjust="spacingAndGlyphs" stroke="#e4e4e4" stroke-width="0.15">Green</text>
<text x="511.71" y="548.00" font-family="Liberation Sans, sans-serif" font-weight="normal" font-size="8.986" fill="#e4e4e4" textLength="24.56" lengthAdjust="spacingAndGlyphs" stroke="#e4e4e4" stroke-width="0.15">Orange</text>
<text x="551.59" y="548.00" font-family="Liberation Sans, sans-serif" font-weight="normal" font-size="8.986" fill="#e4e4e4" textLength="27.43" lengthAdjust="spacingAndGlyphs" stroke="#e4e4e4" stroke-width="0.15">Purplish</text>
<text x="551.59" y="557.80" font-family="Liberation Sans, sans-serif" font-weight="normal" font-size="8.986" fill="#e4e4e4" textLength="15.20" lengthAdjust="spacingAndGlyphs" stroke="#e4e4e4" stroke-width="0.15">Blue</text>
<text x="589.87" y="548.00" font-family="Liberation Sans, sans-serif" font-weight="normal" font-size="8.986" fill="#e4e4e4" textLength="33.32" lengthAdjust="spacingAndGlyphs" stroke="#e4e4e4" stroke-width="0.15">Moderate</text>
<text x="589.87" y="557.80" font-family="Liberation Sans, sans-serif" font-weight="normal" font-size="8.986" fill="#e4e4e4" textLength="14.47" lengthAdjust="spacingAndGlyphs" stroke="#e4e4e4" stroke-width="0.15">Red</text>
<text x="636.79" y="548.00" font-family="Liberation Sans, sans-serif" font-weight="normal" font-size="8.986" fill="#e4e4e4" textLength="22.19" lengthAdjust="spacingAndGlyphs" stroke="#e4e4e4" stroke-width="0.15">Purple</text>
<text x="678.65" y="548.00" font-family="Liberation Sans, sans-serif" font-weight="normal" font-size="8.986" fill="#e4e4e4" textLength="21.09" lengthAdjust="spacingAndGlyphs" stroke="#e4e4e4" stroke-width="0.15">Yellow</text>
<text x="678.43" y="557.80" font-family="Liberation Sans, sans-serif" font-weight="normal" font-size="8.986" fill="#e4e4e4" textLength="20.54" lengthAdjust="spacingAndGlyphs" stroke="#e4e4e4" stroke-width="0.15">Green</text>
<text x="718.31" y="548.00" font-family="Liberation Sans, sans-serif" font-weight="normal" font-size="8.986" fill="#e4e4e4" textLength="24.25" lengthAdjust="spacingAndGlyphs" stroke="#e4e4e4" stroke-width="0.15">Orange</text>
<text x="718.45" y="557.80" font-family="Liberation Sans, sans-serif" font-weight="normal" font-size="8.986" fill="#e4e4e4" textLength="20.75" lengthAdjust="spacingAndGlyphs" stroke="#e4e4e4" stroke-width="0.15">Yellow</text>
<text x="763.99" y="548.00" font-family="Liberation Sans, sans-serif" font-weight="normal" font-size="8.986" fill="#e4e4e4" textLength="15.29" lengthAdjust="spacingAndGlyphs" stroke="#e4e4e4" stroke-width="0.15">Blue</text>
<text x="802.63" y="548.00" font-family="Liberation Sans, sans-serif" font-weight="normal" font-size="8.986" fill="#e4e4e4" textLength="20.59" lengthAdjust="spacingAndGlyphs" stroke="#e4e4e4" stroke-width="0.15">Green</text>
<text x="847.39" y="548.00" font-family="Liberation Sans, sans-serif" font-weight="normal" font-size="8.986" fill="#e4e4e4" textLength="13.93" lengthAdjust="spacingAndGlyphs" stroke="#e4e4e4" stroke-width="0.15">Red</text>
<text x="884.75" y="548.00" font-family="Liberation Sans, sans-serif" font-weight="normal" font-size="8.986" fill="#e4e4e4" textLength="21.09" lengthAdjust="spacingAndGlyphs" stroke="#e4e4e4" stroke-width="0.15">Yellow</text>
<text x="921.68" y="548.00" font-family="Liberation Sans, sans-serif" font-weight="normal" font-size="8.986" fill="#e4e4e4" textLength="29.99" lengthAdjust="spacingAndGlyphs" stroke="#e4e4e4" stroke-width="0.15">Magenta</text>
<text x="969.54" y="548.00" font-family="Liberation Sans, sans-serif" font-weight="normal" font-size="8.986" fill="#e4e4e4" textLength="16.87" lengthAdjust="spacingAndGlyphs" stroke="#e4e4e4" stroke-width="0.15">Cyan</text>
</svg>
</body></html>
